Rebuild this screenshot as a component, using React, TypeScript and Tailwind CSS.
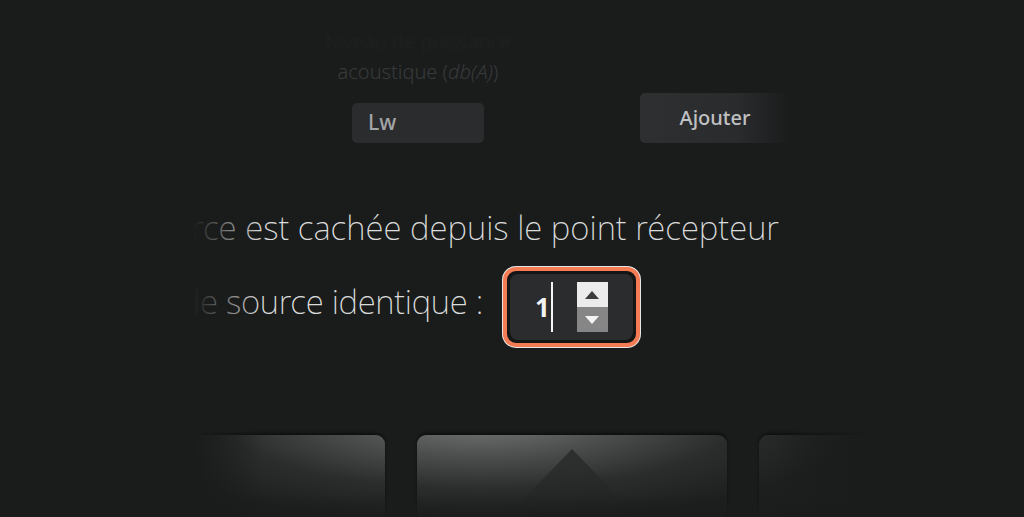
const SpinUp = () => (
  <svg width="14" height="8" viewBox="0 0 14 8">
    <polygon points="7,0 14,8 0,8" fill="#3b3c3d" />
  </svg>
);

const SpinDown = () => (
  <svg width="14" height="8" viewBox="0 0 14 8">
    <polygon points="0,0 14,0 7,8" fill="#f5f5f5" />
  </svg>
);

const NumberField = ({ value }: { value: number }) => (
  <div className="w-[139px] h-[82px] rounded-[14px] p-[1px] bg-[#e4e4e4] shrink-0">
    <div className="h-full rounded-[13px] border-[4px] border-[#f47b53] bg-[#141515] p-[3px]">
      <div className="h-full rounded-[8px] bg-[#2b2c2e] flex items-center pl-[25px]">
        <span className="text-[26px] font-bold text-[#f2f2f2] leading-none">{value}</span>
        <span className="ml-[1px] w-[2px] h-[50px] bg-[#f5f5f5]" />
        <div className="ml-[24px] w-[31px] h-[50px] flex flex-col">
          <div className="h-[25px] bg-[#ececec] flex items-center justify-center">
            <SpinUp />
          </div>
          <div className="h-[25px] bg-[#868686] flex items-center justify-center">
            <SpinDown />
          </div>
        </div>
      </div>
    </div>
  </div>
);

const cardLight =
  'bg-[radial-gradient(ellipse_380px_105px_at_480px_418px,#7a7a7a_0%,#4b4c4c_38%,#2b2c2c_68%,#1d1f1f_100%)] bg-fixed';

export default function App() {
  return (
    <div
      className="relative w-[1024px] h-[517px] overflow-hidden bg-[#1a1c1c]"
      style={{ fontFamily: '"Noto Sans", "Open Sans", sans-serif' }}
    >
      {/* top: sound power field + add button */}
      <div className="flex items-end">
        <div className="ml-[318px] w-[200px] flex flex-col items-center pt-[27px]">
          <div className="text-[20px] leading-[30px] text-center font-light text-[#222424] blur-[0.8px] whitespace-nowrap font-stretch-semi-condensed">
            Niveau de puissance
          </div>
          <div className="text-[20px] leading-[30px] text-center font-light text-[#383a3a] whitespace-nowrap font-stretch-semi-condensed">
            acoustique (<i>db(A)</i>)
          </div>
          <div className="mt-[16px] w-[132px] h-[40px] rounded-[5px] bg-[#2b2c2e] flex items-center pl-[16px] text-[21px] font-medium text-[#a4a5a6] font-stretch-semi-condensed">
            Lw
          </div>
        </div>
        <button className="ml-[122px] w-[150px] h-[50px] rounded-[5px] bg-gradient-to-r from-[#2e2f31] via-[#2a2b2d] via-[65%] to-[#1a1c1c] flex items-center justify-center text-[20px] font-medium text-[#c0c1c2] font-stretch-semi-condensed">
          Ajouter
        </button>
      </div>

      {/* rows */}
      <div className="mt-[68px] w-[779px] flex justify-end">
        <span className="text-[33px] leading-[34px] font-extralight text-[#dcdcdc] whitespace-nowrap font-stretch-semi-condensed">
          La source est cachée depuis le point récepteur
        </span>
      </div>
      <div className="mt-[21px] w-[641px] flex justify-end items-start">
        <span className="mt-[19px] text-[33px] leading-[34px] font-extralight text-[#dcdcdc] whitespace-nowrap tracking-[-0.3px] font-stretch-semi-condensed">
          Nombre de source identique :
        </span>
        <div className="ml-[19px]">
          <NumberField value={1} />
        </div>
      </div>

      {/* carousel cards */}
      <div className="mt-[87px] pl-[75px] flex gap-[32px]">
        <div className={`w-[310px] h-[100px] shrink-0 rounded-t-[9px] shadow-[0_-2px_3px_rgba(0,0,0,0.5)] ${cardLight}`} />
        <div className={`w-[310px] h-[100px] shrink-0 rounded-t-[9px] shadow-[0_-2px_3px_rgba(0,0,0,0.5)] flex justify-center pt-[14px] ${cardLight}`}>
          <svg width="120" height="66" viewBox="0 0 120 66">
            <defs>
              <linearGradient id="tri" x1="0" y1="0" x2="0" y2="1">
                <stop offset="0" stopColor="#2c2d2d" stopOpacity="1" />
                <stop offset="0.7" stopColor="#242525" stopOpacity="0.6" />
                <stop offset="1" stopColor="#1e1f1f" stopOpacity="0" />
              </linearGradient>
            </defs>
            <polygon points="60,0 120,62 0,62" fill="url(#tri)" />
          </svg>
        </div>
        <div className={`w-[310px] h-[100px] shrink-0 rounded-t-[9px] shadow-[0_-2px_3px_rgba(0,0,0,0.5)] ${cardLight}`} />
      </div>

      {/* focus vignette */}
      <div className="pointer-events-none absolute inset-y-0 left-0 w-[262px] bg-gradient-to-r from-[#1a1c1c] from-[74%] to-transparent" />
      <div className="pointer-events-none absolute inset-y-0 right-0 w-[250px] bg-gradient-to-l from-[#1a1c1c] from-[60%] to-transparent" />
      <div className="pointer-events-none absolute inset-x-0 bottom-0 h-[24px] bg-gradient-to-t from-[#1a1c1c]/70 to-transparent" />
    </div>
  );
}
